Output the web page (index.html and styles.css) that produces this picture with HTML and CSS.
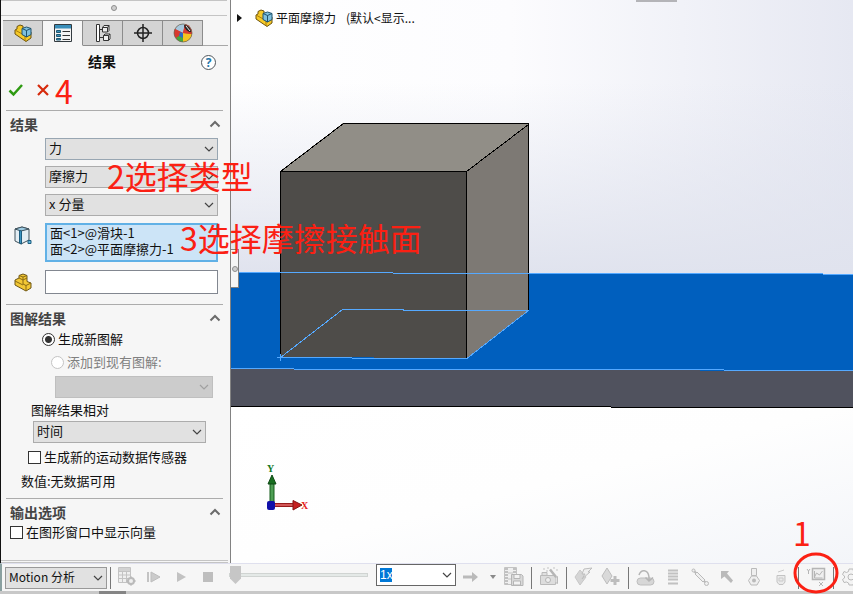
FILE: index.html
```html
<!DOCTYPE html>
<html lang="zh-CN">
<head>
<meta charset="utf-8">
<title>平面摩擦力</title>
<link rel="stylesheet" href="styles.css">
</head>
<body>
<svg class="defs" aria-hidden="true">
  <symbol id="chevron" viewBox="0 0 10 6"><path d="M1 1l4 4 4-4" fill="none" stroke="currentColor" stroke-width="1.2"/></symbol>
  <symbol id="fold" viewBox="0 0 12 8"><path d="M1.500 6.500L6 2l4.500 4.500" fill="none" stroke="#6b6b6b" stroke-width="2"/></symbol>
  <symbol id="part" viewBox="0 0 18 18">
    <path d="M1 6l2-1V2.500L6 1l3 1v3l8 3v6l-5 3.500L1 10z" fill="#f6c927" stroke="#6b5310"/>
    <path d="M1 6l10 5.500V17M11 11.500l6-3.500" fill="none" stroke="#a87b0b"/>
    <path d="M8 4.500L12.500 3 17 4.500v6L12.500 13 8 10.500z" fill="#7fc0de" stroke="#1f536e"/>
    <path d="M8 4.500l4.500 2L17 4.500M12.500 6.500V13" fill="none" stroke="#1f536e"/>
  </symbol>
</svg>
<div class="app">
  <main class="workspace">
    <aside class="panel">
      <div class="grip"><span class="dot"></span></div>
      <nav class="tabs">
        <button class="tab" aria-label="设计树"><svg width="18" height="18"><use href="#part"/></svg></button>
        <button class="tab active" aria-label="属性">
          <svg width="18" height="18" viewBox="0 0 18 18"><path d="M.5.500h17v17H.5z" fill="#f4f4f4" stroke="#333b40"/><path d="M1 1h16v3.500H1z" fill="#3a8fba"/><path d="M2.500 6.500h4v2h-4zM2.500 10.500h4v2h-4zM2.500 14.500h4v1.500h-4z" fill="#3a8fba" stroke="#1f5873"/><path d="M8.500 7.500H16M8.500 11.500H16M8.500 15.500H16" stroke="#333"/></svg>
        </button>
        <button class="tab" aria-label="配置">
          <svg width="16" height="18" viewBox="0 0 16 18"><path d="M1.500.500h3v17h-3zM4.500 5.500h3M4.500 13.500h4" fill="#fff" stroke="#333"/><path d="M7.500 3.500l1.500-2h5v5l-1.500 1.500h-5zM8.500 11.500l1.500-1.500h5v5L13.500 16.500h-5z" fill="#eee" stroke="#333"/><path d="M7.500 3.500h5V8M12.500 3.500l1.500-2M8.500 11.500h5v5M13.500 11.500l1.500-1.500" fill="none" stroke="#333"/></svg>
        </button>
        <button class="tab" aria-label="尺寸">
          <svg width="18" height="18" viewBox="0 0 18 18"><circle cx="9" cy="9" r="5.500" fill="none" stroke="#222" stroke-width="1.500"/><path d="M9 0v18M0 9h18" stroke="#222" stroke-width="1.500"/></svg>
        </button>
        <button class="tab" aria-label="外观">
          <svg width="20" height="20" viewBox="0 0 20 20"><circle cx="10" cy="10" r="9" fill="#d9332b"/><path d="M10 10L2 6a9 9 0 0 1 10-5z" fill="#a8c8de"/><path d="M10 10L2 6a9 9 0 0 0 1 9z" fill="#d93a2e"/><path d="M3 15l7-5v9a9 9 0 0 1-7-4z" fill="#45a83d"/><path d="M10 10v9a9 9 0 0 0 9-8z" fill="#f3c321"/><path d="M10 10l-3-1-1 4 4 2z" fill="#2c6ac8"/><path d="M10 10l9 1A9 9 0 0 0 12 1z" fill="#d93a2e"/><path d="M11 2c4 0 7 3 7 7-2 1-7-3-7-7z" fill="#272727"/><path d="M13 3l4 5" stroke="#e9e9e9"/><circle cx="10" cy="10" r="9" fill="none" stroke="#665" stroke-width=".7"/></svg>
        </button>
      </nav>
      <header class="title">
        <h1>结果</h1>
        <button class="help" aria-label="帮助">?</button>
      </header>
      <div class="actions">
        <button class="icon-btn" aria-label="确定"><svg width="16" height="14" viewBox="0 0 16 14"><path d="M1.500 7.500l4 4L14 2" fill="none" stroke="#2e9a12" stroke-width="2.500"/></svg></button>
        <button class="icon-btn" aria-label="取消"><svg width="12" height="12" viewBox="0 0 12 12"><path d="M1 1l10 10M11 1L1 11" stroke="#d62a0c" stroke-width="2.200"/></svg></button>
        <span class="note">4</span>
      </div>

      <section class="group">
        <h2>结果<svg width="12" height="8"><use href="#fold"/></svg></h2>
        <div class="fields">
          <div class="combo tinted"><select aria-label="类别"><option>力</option></select><svg class="arrow"><use href="#chevron"/></svg></div>
          <div class="combo anchor"><select aria-label="子类别"><option>摩擦力</option></select><svg class="arrow"><use href="#chevron"/></svg><span class="note note-type">2选择类型</span></div>
          <div class="combo"><select aria-label="分量"><option>x 分量</option></select><svg class="arrow"><use href="#chevron"/></svg></div>
        </div>
        <div class="pick list">
          <svg width="18" height="19" viewBox="0 0 18 19"><path d="M1 3l7-2 7 2v11l-8 4-6-3z" fill="#e4eef4" stroke="#40525c"/><path d="M1 3l6 2 8-2-7-2z" fill="#9dcbe3" stroke="#40525c"/><path d="M5.500 4.500L7.500 5v13l-2-1z" fill="#3b94c1" stroke="#1d5e80"/><path d="M14 14.500h3v3h-3z" fill="#65b6dc" stroke="#1d5e80"/></svg>
          <div class="anchor">
            <ul class="selection"><li>面&lt;1&gt;@滑块-1</li><li>面&lt;2&gt;@平面摩擦力-1</li></ul>
            <span class="note note-face">3选择摩擦接触面</span>
          </div>
        </div>
        <div class="pick">
          <svg width="18" height="19" viewBox="0 0 18 19"><path d="M1 7l4-2V2.500L9 1l4 1.500v6l4 1.500v5L12 18 1 12z" fill="#f3c835" stroke="#6c5618"/><path d="M5 5l4 2v4l3 1.500 5-2.500M9 7l4-2M12 12.500V18M1 8l8 4M5 2.500l4 1.500 4-1.500M9 4v3" fill="none" stroke="#8a6b15"/></svg>
          <input class="text" type="text" aria-label="零部件">
        </div>
      </section>

      <section class="group">
        <h2>图解结果<svg width="12" height="8"><use href="#fold"/></svg></h2>
        <div class="plot">
          <label class="choice in-2"><input type="radio" name="plot" checked>生成新图解</label>
          <label class="choice in-3 off"><input type="radio" name="plot" disabled>添加到现有图解:</label>
          <div class="combo in-3 disabled"><select aria-label="现有图解" disabled><option></option></select><svg class="arrow"><use href="#chevron"/></svg></div>
          <div class="relative-to">
            <label for="versus">图解结果相对</label>
            <div class="combo"><select id="versus"><option>时间</option></select><svg class="arrow"><use href="#chevron"/></svg></div>
          </div>
          <label class="choice in-1"><input type="checkbox">生成新的运动数据传感器</label>
          <p class="value">数值:无数据可用</p>
        </div>
      </section>

      <section class="group">
        <h2>输出选项<svg width="12" height="8"><use href="#fold"/></svg></h2>
        <label class="choice"><input type="checkbox">在图形窗口中显示向量</label>
      </section>
      <div class="panel-end"></div>
    </aside>

    <section class="viewport">
      <svg class="scene" viewBox="231 0 622 563" preserveAspectRatio="xMinYMin slice">
        <defs>
          <linearGradient id="sky" x1="0" y1="0" x2="1" y2="0"><stop offset="0" stop-color="#fff"/><stop offset=".45" stop-color="#fcfcfe"/><stop offset="1" stop-color="#e6e8f2"/></linearGradient>
          <linearGradient id="haze" x1="0" y1="0" x2="0" y2="1"><stop offset="0" stop-color="#e0e3ee" stop-opacity="0"/><stop offset=".3" stop-color="#e0e3ee" stop-opacity="0"/><stop offset="1" stop-color="#e0e3ee"/></linearGradient>
          <linearGradient id="floor" x1="0" y1="0" x2="1" y2="1"><stop offset="0" stop-color="#fff"/><stop offset=".5" stop-color="#fefefe"/><stop offset="1" stop-color="#f3f5f9"/></linearGradient>
        </defs>
        <path d="M231 0h622v274H231z" fill="url(#sky)"/>
        <path d="M231 0h622v274H231z" fill="url(#haze)"/>
        <path d="M231 406h622v157H231z" fill="url(#floor)"/>
        <path d="M636 0h41v2h-41z" fill="#b4b4b8"/>
        <g shape-rendering="crispEdges">
          <path d="M231 272l622 2v97l-622-2z" fill="#005fbe"/>
          <path d="M231 369l622 2v36H231z" fill="#50525e"/>
          <path d="M231 406.500h380M611 407.500h242" stroke="#000"/>
          <path d="M280 171l63-48 186 1-62 47z" fill="#918e87"/>
          <path d="M467 171l62-47v187l-62 47z" fill="#7d7974"/>
          <path d="M280 171h187v187l-187-1z" fill="#4e4c49"/>
          <path d="M280.500 357V171.500h186V358M280.500 171.500l63-48h185V310M466.500 171.500l62-47" fill="none" stroke="#000"/>
          <path d="M231 272.500h162M393 273.500h430M823 274.500h30M231 368.500h63M294 369.500h430M724 370.500h129M280.500 357.500l62-48h61M403 310.500h125.500l-61 47.500H352M280 357.500h72M277 357.500h7M280.500 354v7" fill="none" stroke="#55a9ff"/>
        </g>
        <g>
          <path d="M270 483h4v21h-4z" fill="#4e9e54" stroke="#155d1b"/>
          <path d="M272 475l4 9h-8z" fill="#176f20" stroke="#0e4814"/>
          <path d="M274 503.500h20v3h-20z" fill="#d25757" stroke="#961a1a"/>
          <path d="M293 500.500l9 4.500-9 5z" fill="#c51e1e" stroke="#861010"/>
          <rect x="267" y="501" width="8" height="9" rx="2" fill="#1010a8"/>
          <text class="axis" x="267" y="472" fill="#11781d">Y</text>
          <text class="axis" x="301" y="509" fill="#e62121">X</text>
        </g>
      </svg>
      <div class="tree">
        <svg width="5" height="8" viewBox="0 0 5 8"><path d="M0 0l5 4-5 4z" fill="#111"/></svg>
        <svg width="18" height="18"><use href="#part"/></svg>
        <span>平面摩擦力</span><span>(默认&lt;显示...</span>
      </div>
      <div class="handle"><span class="dot"></span></div>
    </section>
  </main>

  <footer class="toolbar">
    <div class="combo study"><select aria-label="算例类型"><option>Motion 分析</option></select><svg class="arrow"><use href="#chevron"/></svg></div>
    <i class="sep"></i>
    <button class="tool" aria-label="计算"><svg width="19" height="19" viewBox="0 0 19 19"><path d="M1.500.500h12v15h-12zM1.500 4.500h12M1.500 8h12M1.500 11.500h12M5.500 4.500v11M9.500 4.500v11" fill="#eee" stroke="#bbb"/><path d="M2 1h11v3H2z" fill="#ccc"/><circle cx="14" cy="14" r="3" fill="#eee" stroke="#b0b0b0" stroke-width="2"/><path d="M14 9.500v2M14 16.500v2M9.500 14h2M16.500 14h2" stroke="#b0b0b0" stroke-width="2"/></svg></button>
    <button class="tool" aria-label="从头播放"><svg width="14" height="12" viewBox="0 0 14 12"><path d="M1 1v10" stroke="#bbb" stroke-width="2"/><path d="M4 1l9 5-9 5z" fill="#c4c4c4" stroke="#b4b4b4"/></svg></button>
    <button class="tool" aria-label="播放"><svg width="10" height="12" viewBox="0 0 10 12"><path d="M1 1l9 5-9 5z" fill="#b9b9b9"/></svg></button>
    <button class="tool" aria-label="停止"><svg width="10" height="10"><path d="M0 0h10v10H0z" fill="#b5b5b5"/></svg></button>
    <input class="time" type="range" min="0" max="100" value="0" aria-label="时间">
    <div class="speed"><input type="text" value="1x" aria-label="播放速度"><svg class="arrow"><use href="#chevron"/></svg></div>
    <button class="tool wide" aria-label="播放模式"><svg width="16" height="12" viewBox="0 0 16 12"><path d="M0 4.500h9V1l6 5-6 5V7.500H0z" fill="#b0b0b0"/></svg></button>
    <button class="tool narrow" aria-label="更多模式"><svg width="6" height="4"><path d="M0 0h6L3 4z" fill="#777"/></svg></button>
    <button class="tool" aria-label="保存动画"><svg width="20" height="19" viewBox="0 0 20 19"><path d="M.5.500h12v17H.5z" fill="#eee" stroke="#bbb"/><path d="M2.500 1v17M10.500 1v17" stroke="#b8b8b8" stroke-width="3" stroke-dasharray="2 1"/><path d="M4 6h5M4 12h5" stroke="#bbb"/><path d="M7.500 7.500h10l1.500 1.500v9.500H7.500z" fill="#d4d4d4" stroke="#aaa"/><path d="M10 7.500h6v4h-6zM9.500 14h7v4h-7z" fill="#f2f2f2" stroke="#aaa"/></svg></button>
    <i class="sep"></i>
    <button class="tool" aria-label="动画向导"><svg width="20" height="19" viewBox="0 0 20 19"><path d="M1.500 8.500h15v9h-15z" fill="#d9d9d9" stroke="#b0b0b0"/><path d="M3 8V5.500h5V8M16.500 10.500l2-1v7l-2-1" fill="#ddd" stroke="#b0b0b0"/><circle cx="9" cy="13" r="2.500" fill="#eee" stroke="#aaa"/><path d="M11 2.500l6 7.500" stroke="#aaa" stroke-width="2.500"/><path d="M4 2h2M8 1h2M14 1h2M17 3h2M7 4h2" stroke="#bbb"/></svg></button>
    <i class="sep"></i>
    <button class="tool" aria-label="自动键码"><svg width="19" height="19" viewBox="0 0 19 19"><path d="M6 3L1 10l5 8 6-8z" fill="#d0d0d0" stroke="#c0c0c0"/><path d="M10 2l8-1-4 4h2l-8 7 3-5H8z" fill="#eee" stroke="#b4b4b4"/></svg></button>
    <button class="tool" aria-label="添加键码"><svg width="19" height="19" viewBox="0 0 19 19"><path d="M6 1l5 8-5 8-5-8z" fill="#d4d4d4" stroke="#b4b4b4"/><path d="M14 9v9M9.500 13.500h9" stroke="#b4b4b4" stroke-width="3"/></svg></button>
    <i class="sep"></i>
    <button class="tool" aria-label="马达"><svg width="19" height="18" viewBox="0 0 19 18"><rect x="1" y="10" width="17" height="7" rx="3.500" fill="#d2d2d2" stroke="#b5b5b5"/><path d="M3 7c2-6 9-6 10 2v3M9.500 9.500l3.500 3.500 4-3.500" fill="none" stroke="#aaa" stroke-width="1.500"/></svg></button>
    <button class="tool" aria-label="弹簧"><svg width="12" height="16" viewBox="0 0 12 16"><path d="M1 1.500h10M1 4.500h10M1 7.500h10M1 10.500h10M1 14.500h10" stroke="#b8b8b8" stroke-width="2"/></svg></button>
    <button class="tool" aria-label="阻尼"><svg width="18" height="18" viewBox="0 0 18 18"><path d="M2 2l13 13" stroke="#b0b0b0" stroke-width="2"/><path d="M4 6l2-2 8 8-2 2z" fill="#eee" stroke="#b0b0b0"/><circle cx="2.500" cy="2.500" r="1.500" fill="#eee" stroke="#b0b0b0"/><circle cx="15.500" cy="15.500" r="2" fill="#eee" stroke="#b0b0b0"/></svg></button>
    <button class="tool" aria-label="力"><svg width="12" height="12" viewBox="0 0 12 12"><path d="M0 0h8L6 2.500l6 7L10 12 3.500 5.500 0 8z" fill="#b0b0b0"/></svg></button>
    <button class="tool" aria-label="接触"><svg width="12" height="18" viewBox="0 0 12 18"><path d="M3.500.500h5v7h-5z" fill="#eee" stroke="#b0b0b0"/><path d="M3.500 8L.5 12.500 3 17h6l2.500-4.500L8.500 8z" fill="#eee" stroke="#b0b0b0"/><circle cx="6" cy="12.500" r="2" fill="#b0b0b0"/></svg></button>
    <button class="tool" aria-label="引力"><svg width="10" height="16" viewBox="0 0 10 16"><path d="M1 6.500h8V13l-2 2.500H3L1 13z" fill="#e8e8e8" stroke="#bbb"/><path d="M2 3l6-2M3 9h4v3H3z" fill="none" stroke="#c4c4c4"/></svg></button>
    <i class="sep"></i>
    <div class="anchor">
      <button class="tool" aria-label="结果和图解"><svg width="20" height="20" viewBox="0 0 20 20"><path d="M6.500 1.500h12v11h-12z" fill="#eee" stroke="#aaa" stroke-width="1.500"/><path d="M8.500 10l2-4 3 2 3-4M8.500 4v7h8" fill="none" stroke="#aaa"/><path d="M1 2l1.500 2L4 2M2.500 4v3M13 15l4 4M17 15l-4 4" fill="none" stroke="#aaa"/></svg></button>
      <svg class="ring" viewBox="0 0 46 42"><ellipse cx="23" cy="21" rx="21" ry="19" fill="none" stroke="#fb2013" stroke-width="3"/></svg>
      <span class="note note-one">1</span>
    </div>
    <i class="sep"></i>
    <button class="tool" aria-label="算例属性"><svg width="18" height="18" viewBox="0 0 18 18"><path d="M7 1h4l.5 2.500 2 1L16 3.500l1.500 3.500-2 1.500v2l2 1.500-1.500 3-2.500-.5-2 1L11 17H7l-.5-2-2-1-2.500.5L.5 11.500l2-1.500V8L.5 6.500 2 3.500l2.500 1 2-1z" fill="#f4f4f4" stroke="#b0b0b0"/><circle cx="9" cy="9" r="3" fill="none" stroke="#b0b0b0"/></svg></button>
  </footer>
  <div class="strip"><span class="strip-thumb"></span></div>
</div>
</body>
</html>
```
FILE: styles.css
```css
* { box-sizing: border-box; }

body {
  margin: 0;
  font: 13px/16px "Noto Sans CJK SC", sans-serif;
  color: #111;
  background: #f6f6f6;
  overflow: hidden;
}

button, input, select { font: inherit; color: inherit; margin: 0; }
button { padding: 0; border: 0; background: none; display: grid; place-items: center; }
h1, h2, p, ul { margin: 0; padding: 0; }
li { list-style: none; }

.defs { display: none; }
.app { display: flex; flex-direction: column; height: 100vh; }
.workspace { display: flex; flex: 1; min-height: 0; }
.anchor { position: relative; }

/* property panel */
.panel {
  position: relative;
  z-index: 1;
  display: flex;
  flex-direction: column;
  flex: 0 0 231px;
  background: #f6f6f6;
  border-left: 1px solid #111;
  border-right: 1px solid #828282;
}
.grip {
  display: grid;
  place-items: center;
  height: 16px;
  margin-right: 3px;
  border-top: 1px solid #c4c4c4;
  border-bottom: 1px solid #c4c4c4;
}
.dot { width: 6px; height: 6px; border: 1px solid #8e8e8e; border-radius: 50%; background: #cfcfcf; }

.tabs { display: flex; margin: 4px 2px 0; }
.tabs::after { content: ""; flex: 1; border-bottom: 1px solid #a8a8a8; }
.tab {
  width: 40px;
  height: 26px;
  background: #d4d4d4;
  border: 1px solid #8c8c8c;
  border-left-width: 0;
}
.tab.active { background: #f6f6f6; border-top-color: #8c8c8c; border-bottom-color: transparent; }

.title { display: grid; grid-template-columns: 1fr auto; align-items: center; height: 32px; padding-right: 14px; }
.title h1 { font-size: 14px; line-height: 20px; text-align: center; padding-left: 2px; margin-top: -2px; }
.help {
  width: 15px;
  height: 15px;
  border: 1px solid #50565c;
  border-radius: 50%;
  background: #fff;
  color: #2476a8;
  font: bold 12px/13px "Open Sans", sans-serif;
}
.actions { display: flex; align-items: center; height: 24px; padding-left: 7px; margin-bottom: 8px; gap: 13px; }
.actions .note { margin-left: -7px; }
.note { color: #fb2013; font-size: 32px; line-height: 32px; white-space: nowrap; pointer-events: none; }

.group { margin: 0 7px 0 5px; border-top: 1px solid #acacac; }
.group h2 {
  display: flex;
  align-items: center;
  justify-content: space-between;
  height: 25px;
  padding: 0 2px 0 4px;
  font-size: 14px;
  line-height: 20px;
  color: #444;
}
.fields { display: grid; gap: 6px; margin: 2px 5px 7px 39px; }

.combo { display: grid; align-items: center; height: 22px; color: #111; }
.combo select {
  grid-area: 1 / 1;
  width: 100%;
  height: 100%;
  padding: 0 20px 2px 3px;
  appearance: none;
  border: 1px solid #acacac;
  border-radius: 0;
  background: #e1e1e1;
}
.combo.tinted select { border-color: #98a6b2; }
.combo .arrow { grid-area: 1 / 1; justify-self: end; margin-right: 4px; }
.arrow { width: 10px; height: 6px; color: #444; pointer-events: none; }
.combo.disabled select { background: #ccc; border-color: #bfbfbf; opacity: 1; }
.combo.disabled .arrow { color: #a0a0a0; }

.note-type { position: absolute; left: 62px; top: -7px; z-index: 2; }
.note-face { position: absolute; left: 135px; top: -2px; z-index: 2; }

.pick { display: grid; grid-template-columns: 18px 1fr; align-items: center; gap: 13px; margin: 0 5px 10px 8px; }
.pick.list { align-items: start; margin-bottom: 8px; }
.pick.list > svg { margin-top: 3px; }
.selection { padding: 0 3px; height: 39px; border: 2px solid #61b1e6; background: #cce4f7; line-height: 16px; }
.text { width: 100%; height: 24px; border: 1px solid #828790; background: #fff; }

.plot { display: flex; flex-direction: column; }
.choice { display: flex; align-items: center; gap: 3px; height: 16px; padding-left: 4px; white-space: nowrap; }
.choice input {
  appearance: none;
  width: 13px;
  height: 13px;
  border: 1px solid #333;
  background: #fff;
}
.choice input[type="radio"] { border-radius: 50%; }
.choice input[type="radio"]:checked { background: radial-gradient(circle, #333 0 3px, #fff 4px); }
.choice.off { color: #808080; }
.choice.off input { border-color: #c4c4c4; }
.choice.in-1 { padding-left: 22px; margin: 6px 0 8px; }
.choice.in-2 { padding-left: 36px; margin: 1px 0 7px; }
.choice.in-3 { padding-left: 45px; margin-bottom: 6px; }
.combo.in-3 { margin: 0 10px 4px 49px; }
.relative-to { margin: 0 17px 0 27px; }
.relative-to label { display: block; height: 19px; margin-left: -2px; }
.value { padding-left: 15px; margin-bottom: 9px; }
.panel-end { height: 3px; margin: auto 2px 0 0; border-top: 1px solid #c4c4c4; border-bottom: 1px solid #c4c4c4; }

/* model view */
.viewport { position: relative; flex: 1; min-width: 0; overflow: hidden; background: #fff; }
.scene { display: block; width: 100%; height: 100%; }
.axis { font: bold 10px "Liberation Serif", serif; }
.tree {
  position: absolute;
  left: 6px;
  top: 9px;
  display: flex;
  align-items: center;
  font-size: 12px;
  white-space: nowrap;
}
.tree svg + svg { margin: 0 3px 0 13px; }
.tree span + span { margin-left: 10px; }
.handle {
  position: absolute;
  left: 0;
  top: 249px;
  display: grid;
  place-items: center;
  width: 8px;
  height: 39px;
  background: #f6f6f6;
  border: 1px solid #828282;
  border-left: 0;
}

/* motion toolbar */
.toolbar {
  display: flex;
  align-items: center;
  height: 28px;
  padding-left: 3px;
  background: #f6f6f6;
  border-top: 1px solid #dfe0ee;
  border-left: 2px solid #8aa0a0;
}
.toolbar > * { flex-shrink: 0; }
.study { width: 102px; }
.study select { border-color: #999; font-size: 12px; }
.sep { width: 8px; height: 22px; background: linear-gradient(#777, #777) center / 1px 100% no-repeat; }
.study + .sep { width: 6px; }
.tool { width: 27px; height: 26px; padding-bottom: 2px; }
.tool svg { opacity: .85; }
.tool.wide { width: 29px; }
.tool.narrow { width: 15px; }
.time {
  appearance: none;
  align-self: flex-start;
  width: 139px;
  height: 18px;
  margin: 2px 8px 0 8px;
  background: none;
}
.time::-webkit-slider-runnable-track { height: 4px; background: #e4e9e7; border: 1px solid #d0d4d2; }
.time::-webkit-slider-thumb {
  appearance: none;
  width: 11px;
  height: 18px;
  margin-top: -8px;
  background: #c6c6c6;
  clip-path: polygon(0 0, 100% 0, 100% 70%, 50% 100%, 0 70%);
}
.speed {
  display: flex;
  align-items: center;
  justify-content: space-between;
  align-self: flex-start;
  width: 80px;
  height: 22px;
  padding: 0 3px;
  background: #fff;
  border: 1px solid #666;
}
.speed input { width: 12px; height: 14px; padding: 0; border: 0; background: #0078d7; color: #fff; font: 12px/14px "Liberation Sans", sans-serif; }
.ring { position: absolute; left: -9px; top: -13px; width: 46px; height: 42px; z-index: 2; pointer-events: none; }
.note-one { position: absolute; left: -9px; top: -49px; z-index: 2; }
.strip { height: 3px; background: #c8c8c8; }
.strip-thumb { display: block; width: 27px; height: 3px; margin-left: 99px; background: #858585; }
```
